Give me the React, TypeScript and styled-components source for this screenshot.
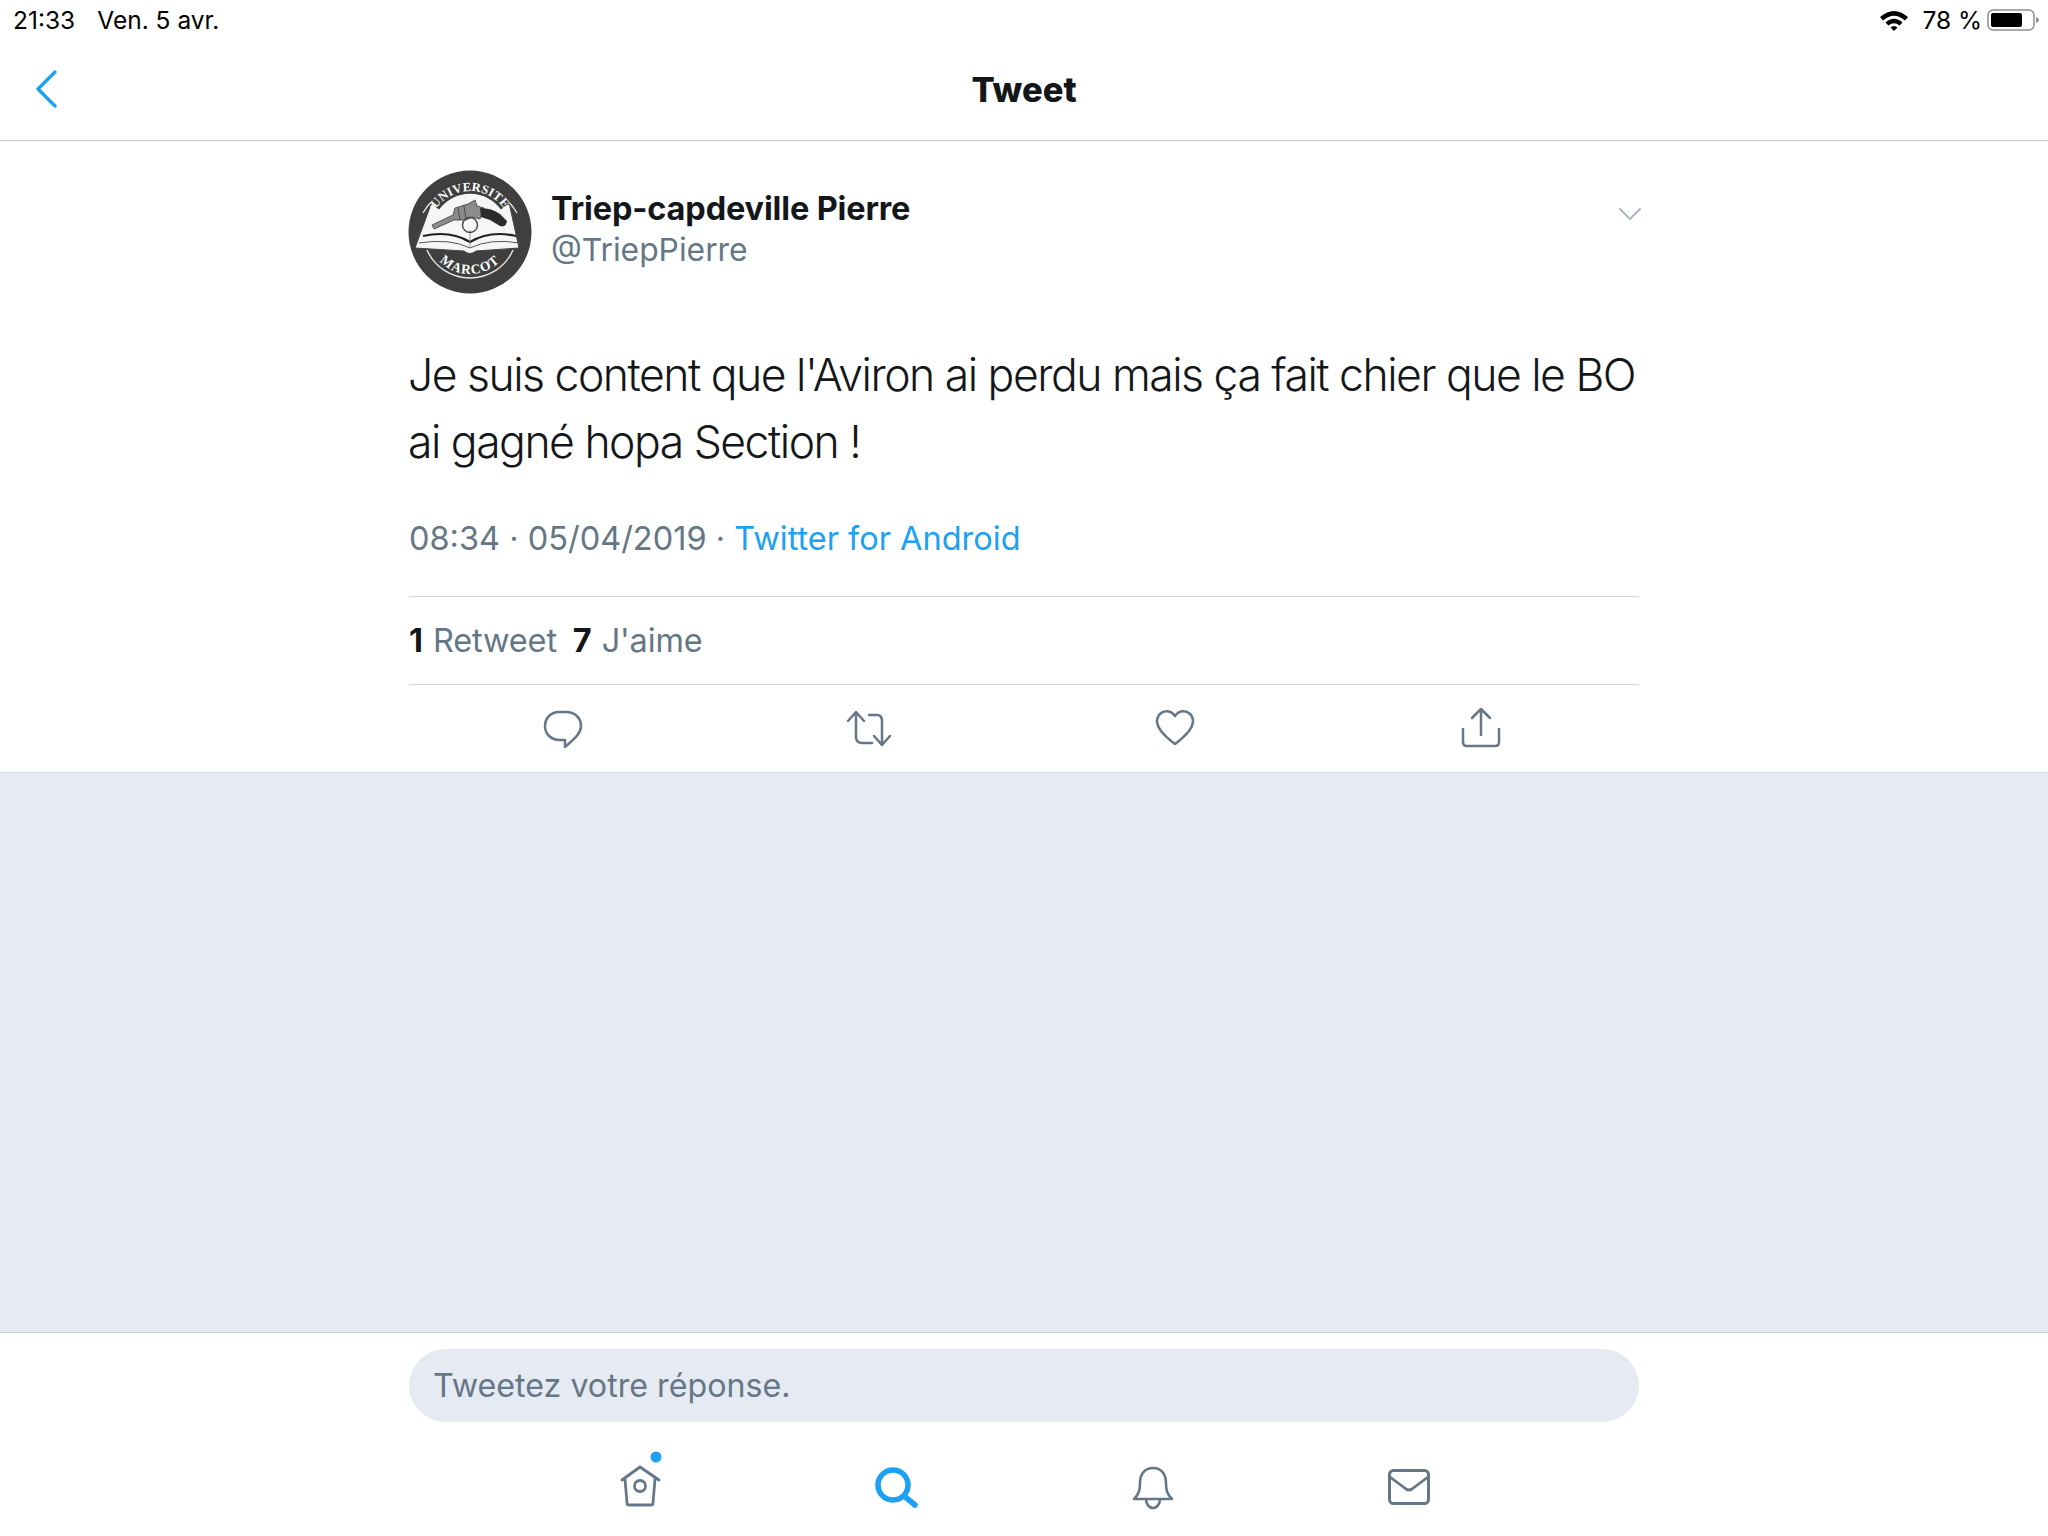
import React from "react";
import styled, { createGlobalStyle } from "styled-components";

const Global = createGlobalStyle`
  html, body { margin: 0; padding: 0; background: #fff; }
  body { font-family: Inter, "Liberation Sans", sans-serif; }
`;
const Page = styled.div`
  width: 2048px; height: 1536px; display: flex; flex-direction: column; overflow: hidden; background: #fff; color: #14171a;
`;
const StatusBar = styled.div`
  height: 40px; display: flex; align-items: center; justify-content: space-between; padding: 0 9px 0 13px;
  font-size: 24.5px; color: #000; box-sizing: border-box;
`;
const StatusLeft = styled.div`display: flex; gap: 22px;`;
const StatusRight = styled.div`display: flex; align-items: center; gap: 5px;`;
const NavBar = styled.div`
  height: 101px; display: flex; align-items: center; justify-content: center; position: relative; border-bottom: 1px solid #c4c9ce; box-sizing: border-box;
`;
const NavTitle = styled.div`font-size: 34.5px; font-weight: 800; margin-top: -2px;`;
const BackButton = styled.div`position: absolute; left: 35px; top: 30px; display: flex;`;
const TweetPanel = styled.div`
  height: 632px; display: flex; flex-direction: column; align-items: center; box-sizing: border-box; border-bottom: 1px solid #d3d8de;
`;
const Column = styled.div`width: 1230px; display: flex; flex-direction: column;`;
const AuthorRow = styled.div`display: flex; padding-top: 29px; position: relative;`;
const AvatarSlot = styled.div`flex: none; width: 124px; height: 124px; margin-left: -1px;`;
const AuthorText = styled.div`display: flex; flex-direction: column; margin: 18px 0 0 19px;`;
const Name = styled.div`font-size: 32.5px; font-weight: 700; line-height: 41px; letter-spacing: -0.15px;`;
const Handle = styled.div`font-size: 31.8px; line-height: 41px; color: #657786;`;
const Chevron = styled.div`position: absolute; right: -3px; top: 66px; display: flex;`;
const Body = styled.div`font-size: 44.5px; font-weight: 300; line-height: 67px; letter-spacing: -1.5px; margin: 48px 0 0 -1px; white-space: nowrap;`;
const Meta = styled.div`font-size: 32.5px; line-height: 44px; color: #657786; margin-top: 41px;`;
const Source = styled.span`color: #1da1f2;`;
const Counts = styled.div`
  margin-top: 35px; border-top: 1px solid #d3d8de; border-bottom: 1px solid #d3d8de; height: 89px; box-sizing: border-box;
  display: flex; align-items: center; gap: 16px; font-size: 32.5px; color: #657786;
`;
const CountLabel = styled.span`letter-spacing: -0.15px;`;
const Count = styled.span`font-weight: 700; color: #14171a; margin-right: 10px;`;
const Actions = styled.div`display: grid; grid-template-columns: repeat(4, 306px); padding-top: 25px; margin-left: 1px;`;
const ActionCell = styled.div`display: flex; justify-content: center; height: 44px;`;
const Gap = styled.div`flex: 1; background: #e6eaf2;`;
const Composer = styled.div`
  height: 204px; border-top: 1px solid #c9ced4; background: #fff; display: flex; flex-direction: column; align-items: center; box-sizing: border-box;
`;
const Input = styled.div`
  width: 1230px; height: 73px; margin-top: 16px; border-radius: 37px; background: #e6eaf2; display: flex; align-items: center;
  padding-left: 24px; box-sizing: border-box; font-size: 32.2px; color: #657786;
`;
const Tabs = styled.div`display: grid; grid-template-columns: repeat(4, 256px); margin-top: 45px; margin-left: 1px;`;
const Tab = styled.div`display: flex; justify-content: center; height: 50px;`;

const gray = "#657786";
const Icon = styled.svg`display: block; overflow: visible;`;
const HomeIcon = styled(Icon)`position: relative; top: -11px;`;
const WifiIcon = styled(Icon)`margin-right: 8px;`;
const BellIcon = styled(Icon)`margin-top: -1px;`;
const MailIcon = styled(Icon)`margin-top: 2px;`;
const ShareIcon = styled(Icon)`margin-top: -2px;`;

const Avatar = () => (
  <Icon width="124" height="124" viewBox="0 0 124 124">
    <defs>
      <path id="topArc" d="M21 62 A41 41 0 0 1 103 62" />
      <path id="botArc" d="M20 62 A42 42 0 0 0 104 62" />
    </defs>
    <circle cx="62" cy="62" r="61.5" fill="#3f3f3f" />
    <path d="M15 43 A54 54 0 0 1 109 43" fill="none" stroke="#e6e6e6" strokeWidth="1.4" />
    <path d="M19 80 A47 47 0 0 0 105 80" fill="none" stroke="#e6e6e6" strokeWidth="1.4" />
    <path d="M22 37 L7 78 L56 81 Q62 86 68 81 L111 78 L102 37 L97 30 Q62 14 27 30 Z" fill="#f6f6f6" />
    <path d="M22 37 L7 78 L56 81 Q62 86 68 81 L111 78 L102 37" fill="none" stroke="#444" strokeWidth="1" />
    <path d="M25 35 A46 46 0 0 1 99 35" fill="none" stroke="#3f3f3f" strokeWidth="15" />
    <path d="M15 66 Q42 60 62 72 Q82 60 108 66" fill="none" stroke="#222" strokeWidth="2.2" />
    <path d="M11 73 Q42 68 62 78 Q82 68 112 73" fill="none" stroke="#555" strokeWidth="1" />
    <path d="M62 60 V78" stroke="#888" strokeWidth="0.8" />
    <path d="M24 55 L45 45 L47 38 L60 34 L67 30 L69 36 L76 38 L72 49 L64 47 L58 50 L46 50 L26 59 Z" fill="#8c8c8c" stroke="#3a3a3a" strokeWidth="0.8" />
    <path d="M50 38 L52 50 M56 36 L58 49" stroke="#3a3a3a" strokeWidth="0.8" />
    <path d="M72 38 Q84 38 92 44 L99 51 Q98 58 92 56 L82 50 L73 47 Z" fill="#2b2b2b" />
    <circle cx="62" cy="55" r="7.5" fill="none" stroke="#444" strokeWidth="1.4" />
    <text fontFamily="Liberation Serif, serif" fontWeight="700" fontSize="12.5" fill="#fff" letterSpacing="0.2">
      <textPath href="#topArc" startOffset="50%" textAnchor="middle">UNIVERSITE</textPath>
    </text>
    <text fontFamily="Liberation Serif, serif" fontWeight="700" fontSize="13.5" fill="#fff" letterSpacing="1">
      <textPath href="#botArc" startOffset="50%" textAnchor="middle">MARCOT</textPath>
    </text>
  </Icon>
);

export default function App() {
  return (
    <Page>
      <Global />
      <StatusBar>
        <StatusLeft><span>21:33</span><span>Ven. 5 avr.</span></StatusLeft>
        <StatusRight>
          <WifiIcon width="30" height="22" viewBox="0 0 30 22">
            <path d="M1 8 Q15 -4 29 8 L26 11.5 Q15 2 4 11.5 Z" fill="#000" />
            <path d="M6.5 13.5 Q15 6 23.5 13.5 L20.6 16.6 Q15 12 9.4 16.6 Z" fill="#000" />
            <path d="M11.5 18.6 Q15 15.6 18.5 18.6 L15 22 Z" fill="#000" />
          </WifiIcon>
          <span>78 %</span>
          <Icon width="52" height="24" viewBox="0 0 52 24">
            <rect x="1" y="2" width="46" height="20" rx="5" fill="none" stroke="#8e8e8e" strokeWidth="1.5" />
            <rect x="4" y="5" width="31" height="14" rx="2" fill="#000" />
            <path d="M49 9 Q52 10 52 12 Q52 14 49 15 Z" fill="#8e8e8e" />
          </Icon>
        </StatusRight>
      </StatusBar>
      <NavBar>
        <BackButton>
          <Icon width="22" height="38" viewBox="0 0 22 38">
            <path d="M20 2 L3 19 L20 36" fill="none" stroke="#1da1f2" strokeWidth="3.4" strokeLinecap="round" strokeLinejoin="round" />
          </Icon>
        </BackButton>
        <NavTitle>Tweet</NavTitle>
      </NavBar>
      <TweetPanel>
        <Column>
          <AuthorRow>
            <AvatarSlot><Avatar /></AvatarSlot>
            <AuthorText>
              <Name>Triep-capdeville Pierre</Name>
              <Handle>@TriepPierre</Handle>
            </AuthorText>
            <Chevron>
              <Icon width="24" height="14" viewBox="0 0 24 14">
                <path d="M2 2 L12 12 L22 2" fill="none" stroke="#aab8c2" strokeWidth="2" strokeLinecap="round" strokeLinejoin="round" />
              </Icon>
            </Chevron>
          </AuthorRow>
          <Body>
            Je suis content que l'Aviron ai perdu mais ça fait chier que le BO<br />ai gagné hopa Section !
          </Body>
          <Meta>08:34 · 05/04/2019 · <Source>Twitter for Android</Source></Meta>
          <Counts>
            <CountLabel><Count>1</Count>Retweet</CountLabel>
            <CountLabel><Count>7</Count>J'aime</CountLabel>
          </Counts>
          <Actions>
            <ActionCell>
              <Icon width="38" height="40" viewBox="0 0 38 40">
                <path d="M15 2 H22 C31 2 37 8 37 16 C37 24 30 29 21 37 V30 H16 C7 30 1 24 1 16 C1 8 7 2 15 2 Z" fill="none" stroke={gray} strokeWidth="2.5" strokeLinejoin="round" />
              </Icon>
            </ActionCell>
            <ActionCell>
              <Icon width="46" height="38" viewBox="0 0 46 38">
                <path d="M2 11 L10 2 L18 11 M10 3 V27 Q10 33 16 33 H26 M23 5 H31 Q36 5 36 11 V35 M28 26 L36 35 L44 26" fill="none" stroke={gray} strokeWidth="2.5" strokeLinecap="round" strokeLinejoin="round" />
              </Icon>
            </ActionCell>
            <ActionCell>
              <Icon width="38" height="36" viewBox="0 0 38 36">
                <path d="M19 6 C15 0 8 0 4 4 C-1 9 1 16 5 21 C9 26 15 31 19 34 C23 31 29 26 33 21 C37 16 39 9 34 4 C30 0 23 0 19 6 Z" fill="none" stroke={gray} strokeWidth="2.5" strokeLinejoin="round" />
              </Icon>
            </ActionCell>
            <ActionCell>
              <ShareIcon width="38" height="40" viewBox="0 0 38 40">
                <path d="M10 10 L19 1 L28 10 M19 2 V27 M1 21 V34 Q1 38 5 38 H33 Q37 38 37 34 V21" fill="none" stroke={gray} strokeWidth="2.5" strokeLinecap="round" strokeLinejoin="round" />
              </ShareIcon>
            </ActionCell>
          </Actions>
        </Column>
      </TweetPanel>
      <Gap />
      <Composer>
        <Input>Tweetez votre réponse.</Input>
        <Tabs>
          <Tab>
            <HomeIcon width="44" height="54" viewBox="0 0 44 54">
              <circle cx="37" cy="1" r="5.5" fill="#1da1f2" />
              <path d="M3 22 L21 9 L40 22 M6 21 L8 45 Q8 47 10 47 H32 Q34 47 34 45 L36 21" transform="translate(0,2)" fill="none" stroke={gray} strokeWidth="2.8" strokeLinecap="round" strokeLinejoin="round" />
              <circle cx="21" cy="30" r="5.5" fill="none" stroke={gray} strokeWidth="2.8" />
            </HomeIcon>
          </Tab>
          <Tab>
            <Icon width="44" height="42" viewBox="0 0 44 42">
              <circle cx="18" cy="18" r="15" fill="none" stroke="#1da1f2" strokeWidth="5.5" />
              <path d="M29 29 L40 38" stroke="#1da1f2" strokeWidth="5.5" strokeLinecap="round" />
            </Icon>
          </Tab>
          <Tab>
            <BellIcon width="42" height="44" viewBox="0 0 42 44">
              <path d="M21 2 C12 2 8 9 8 17 C8 24 7 28 2 33 H40 C35 28 34 24 34 17 C34 9 30 2 21 2 Z M14 33 C14 38 17 42 21 42 C25 42 28 38 28 33" fill="none" stroke={gray} strokeWidth="2.6" strokeLinecap="round" strokeLinejoin="round" />
            </BellIcon>
          </Tab>
          <Tab>
            <MailIcon width="42" height="36" viewBox="0 0 42 36">
              <rect x="1.5" y="1.5" width="39" height="33" rx="4" fill="none" stroke={gray} strokeWidth="3" />
              <path d="M2 8 L18 20 Q21 22 24 20 L40 8" fill="none" stroke={gray} strokeWidth="2.8" strokeLinejoin="round" />
            </MailIcon>
          </Tab>
        </Tabs>
      </Composer>
    </Page>
  );
}
